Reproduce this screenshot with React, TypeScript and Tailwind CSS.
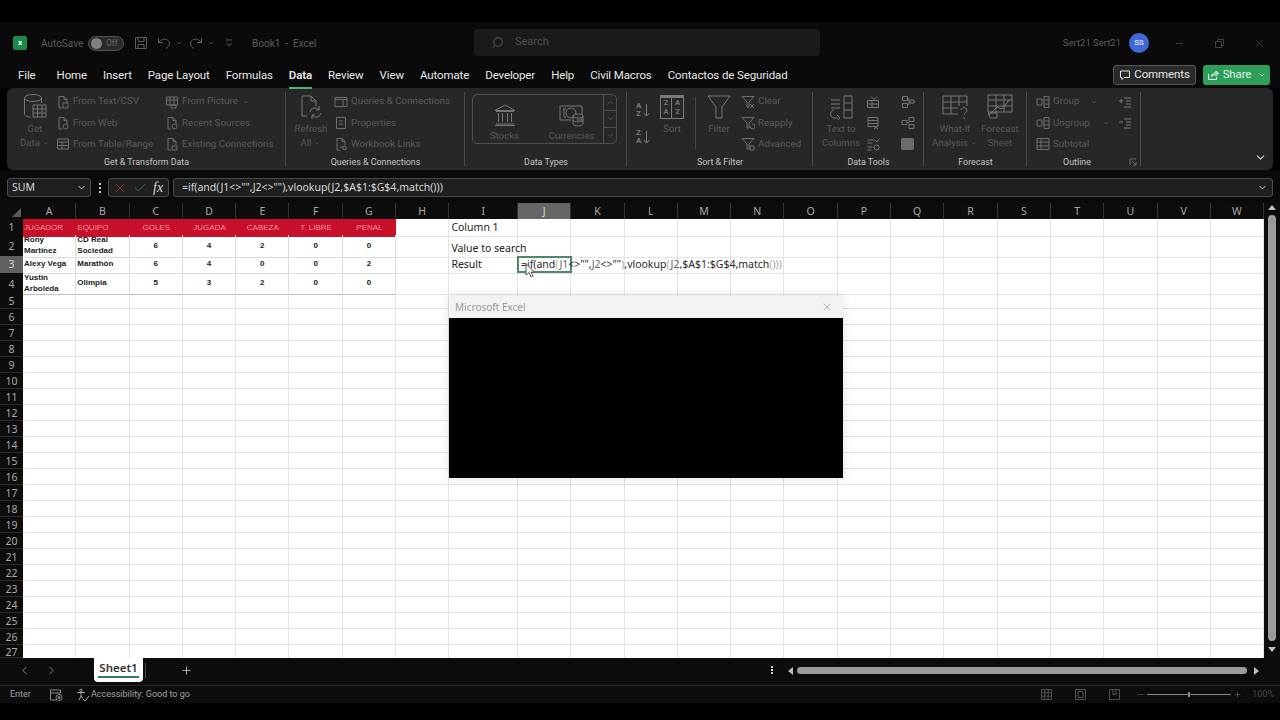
import React from 'react';
import { ChevronDown, ChevronLeft, ChevronRight, Minus, Plus, Search, X, Check } from 'lucide-react';

const rowGrid = 'grid grid-cols-[23px_repeat(8,53.3px)_68.6px_repeat(14,53.3px)]';
const colNames = 'ABCDEFGHIJKLMNOPQRSTUVW'.split('');

function Ic({ s = 16, w, h, vb, className, children }: { s?: number; w?: number; h?: number; vb?: string; className?: string; children: React.ReactNode }) {
  return (
    <svg width={w ?? s} height={h ?? s} viewBox={vb ?? `0 0 ${w ?? s} ${h ?? s}`} fill="none" stroke="currentColor" strokeWidth={1} className={className}>
      {children}
    </svg>
  );
}

const DocFold = ({ children }: { children?: React.ReactNode }) => (
  <Ic s={14}>
    <path d="M3 13V1.5h5l3 3V8M3 13h3M8 1.5v3h3" />
    {children}
  </Ic>
);

function SmallItem({ icon, label, caret, muted = 'text-[#5a5a5a]' }: { icon: React.ReactNode; label: string; caret?: boolean; muted?: string }) {
  return (
    <div className={`flex h-[21.3px] items-center gap-[3px] text-[9.8px] whitespace-nowrap ${muted}`}>
      <span className="flex w-[14px] shrink-0 justify-center text-[#6e6e6e]">{icon}</span>
      <span>{label}</span>
      {caret && <ChevronDown size={8} className="ml-[1px]" />}
    </div>
  );
}

function BigButton({ icon, lines, caret, className = '' }: { icon: React.ReactNode; lines: string[]; caret?: boolean; className?: string }) {
  return (
    <div className={`flex flex-col items-center text-[9.6px] leading-[14px] text-[#585858] ${className}`}>
      <div className="flex h-[31px] items-center text-[#767676]">{icon}</div>
      {lines.map((l, i) => (
        <div key={l} className="flex items-center gap-[2px] whitespace-nowrap">
          {l}
          {caret && i === lines.length - 1 && <ChevronDown size={8} />}
        </div>
      ))}
    </div>
  );
}

function Group({ label, width, sep = true, children, labelClass = '' }: { label: string; width: string; sep?: boolean; children: React.ReactNode; labelClass?: string }) {
  return (
    <div className={`relative flex shrink-0 flex-col pt-[3px] ${width}`}>
      <div className="flex h-[64px]">{children}</div>
      <div className={`mt-[2px] flex h-[12px] items-center justify-center text-[8.9px] text-[#c4c4c4] ${labelClass}`}>{label}</div>
      {sep && <div className="absolute top-[4px] right-0 bottom-[4px] w-px bg-[#4a4a4a]" />}
    </div>
  );
}

function TitleBar() {
  return (
    <div className="flex h-[42px] items-center bg-[#0a0a0a] text-[10px] text-[#5c5c5c]">
      <div className="ml-[13px] flex h-[14px] w-[14px] items-center justify-center rounded-[2px] bg-[#1d8a4c] text-[8px] font-bold text-white">x</div>
      <span className="ml-[14px] w-[41px] whitespace-nowrap">AutoSave</span>
      <div className="ml-[6px] flex h-[15px] w-[36px] items-center rounded-full border border-[#555] bg-[#2a2a2a] px-[2px]">
        <div className="h-[11px] w-[11px] rounded-full bg-[#808080]" />
        <span className="ml-[4px] text-[8.5px] text-[#666]">Off</span>
      </div>
      <Ic s={14} className="ml-[10px] text-[#5c5c5c]">
        <path d="M1.500 1.500h11v11h-11zM4 1.500v4h6v-4M4 12.500V8.500h6v4" />
      </Ic>
      <Ic s={14} className="ml-[9px] text-[#5c5c5c]">
        <path d="M1.500 2v4.500H6M1.500 6.500C4 3 9 2 11.500 5c2 2.500.5 5.500-2.500 7.500" />
      </Ic>
      <ChevronDown size={8} className="ml-[4px]" />
      <Ic s={14} className="ml-[6px] text-[#5c5c5c]">
        <path d="M12.500 2v4.500H8M12.500 6.500C10 3 5 2 2.500 5c-2 2.500-.5 5.500 2.500 7.500" />
      </Ic>
      <ChevronDown size={8} className="ml-[4px]" />
      <Ic s={10} className="ml-[9px] text-[#5c5c5c]">
        <path d="M2 2h6M2.500 5l2.500 3 2.500-3" />
      </Ic>
      <span className="ml-[18px] w-[64px] whitespace-nowrap">Book1&nbsp; -&nbsp; Excel</span>
      <div className="mb-[2px] ml-[158px] flex h-[27px] w-[346px] items-center rounded-[3px] bg-[#1a1a1a] pl-[17px] text-[11px] text-[#4f4f4f]">
        <Search size={13} className="-scale-x-100" />
        <span className="ml-[11px]">Search</span>
      </div>
      <span className="ml-auto text-[9.5px] text-[#5c5c5c]">Sert21 Sert21</span>
      <div className="ml-[8px] flex h-[20px] w-[20px] items-center justify-center rounded-full bg-[#4168d8] text-[8px] text-white">SS</div>
      <Minus size={11} className="ml-[25px] text-[#3f3f3f]" />
      <Ic s={11} className="ml-[29px] text-[#3f3f3f]">
        <path d="M1.500 3.500h6v6h-6zM3.500 3.500v-2h6v6h-2" />
      </Ic>
      <X size={13} strokeWidth={1.2} className="mr-[14px] ml-[28px] text-[#4f4f4f]" />
    </div>
  );
}

function MenuBar() {
  const items: [string, string][] = [
    ['File', 'ml-[18px]'],
    ['Home', 'ml-[21px]'],
    ['Insert', 'ml-[16px]'],
    ['Page Layout', 'ml-[16px]'],
    ['Formulas', 'ml-[16px]'],
    ['Data', 'ml-[16px]'],
    ['Review', 'ml-[16px]'],
    ['View', 'ml-[16px]'],
    ['Automate', 'ml-[16px]'],
    ['Developer', 'ml-[16px]'],
    ['Help', 'ml-[16px]'],
    ['Civil Macros', 'ml-[16px]'],
    ['Contactos de Seguridad', 'ml-[16px]'],
  ];
  return (
    <div className="flex h-[24px] items-center bg-[#0a0a0a] text-[11.5px] tracking-[-0.12px] text-[#e6e6e6]">
      {items.map(([name, cls]) => (
        <div key={name} className={`relative whitespace-nowrap ${cls} ${name === 'Data' ? 'font-semibold' : ''}`}>
          {name}
          {name === 'Data' && <div className="absolute right-0 -bottom-[4px] left-0 h-[2px] bg-[#4fb07a]" />}
        </div>
      ))}
      <div className="mb-[2px] ml-auto flex h-[20px] w-[83px] items-center justify-center gap-[3px] rounded-[3px] border border-[#555] bg-[#2a2a2a] text-[11.5px]">
        <Ic s={12}>
          <path d="M1.500 2h9v6.500H5L3 10.500v-2H1.500z" />
        </Ic>
        Comments
      </div>
      <div className="mr-[10px] mb-[2px] ml-[7px] flex h-[20px] w-[67px] items-center justify-center gap-[4px] rounded-[3px] bg-[#2e9e5b] text-[11.5px] text-[#dff3e6]">
        <Ic s={12}>
          <path d="M4 6.500 9 3v1.500h2M9 3v-1l2.500 2.500L9 7V5.500C6.500 5.500 5 6.500 4 8.500M1.500 5v5.500h8V8" />
        </Ic>
        Share
        <ChevronDown size={8} className="ml-[3px]" />
      </div>
    </div>
  );
}

function Ribbon() {
  return (
    <div className="mx-[7px] flex h-[82px] rounded-[6px] bg-[#272727]">
      <Group label="Get & Transform Data" width="w-[279px]">
        <div className="ml-[10px] w-[36px]">
          <BigButton
            lines={['Get', 'Data']}
            caret
            icon={
              <Ic w={26} h={28}>
                <ellipse cx="11" cy="5" rx="8.500" ry="3.500" />
                <path d="M2.500 5v16c0 2 3 3 6 3M19.500 5v5" />
                <path d="M11 12h13v12H11zM11 16h13M11 20h13M15.500 12v12M20 12v12" />
              </Ic>
            }
          />
        </div>
        <div className="ml-[3px] w-[109px]">
          <SmallItem label="From Text/CSV" icon={<DocFold><path d="M7 8h5v5H7z" /></DocFold>} />
          <SmallItem label="From Web" icon={<DocFold><circle cx="9.500" cy="10.500" r="2.500" /></DocFold>} />
          <SmallItem label="From Table/Range" icon={<Ic s={14}><path d="M1.500 2h11v10h-11zM1.500 5h11M1.500 8.500h11M6 5v7" /></Ic>} />
        </div>
        <div className="w-[110px]">
          <SmallItem label="From Picture" caret icon={<Ic s={14}><path d="M1.500 2h11v8h-11zM1.500 5h11M5 2v8M9 2v8M6 10h5v3H6z" /></Ic>} />
          <SmallItem label="Recent Sources" icon={<DocFold><circle cx="9.500" cy="10.500" r="2.500" /></DocFold>} />
          <SmallItem label="Existing Connections" icon={<DocFold><path d="M7 9h5v4H7z" /></DocFold>} />
        </div>
      </Group>

      <Group label="Queries & Connections" width="w-[179px]">
        <div className="ml-[6px] w-[38px]">
          <BigButton
            lines={['Refresh', 'All']}
            caret
            icon={
              <Ic w={26} h={28} className="mt-[2px]">
                <path d="M4 22V2h9l5 5v5M13 2v5h5M4 22h5" />
                <path d="M12 18a5 5 0 0 1 9-2M23 19a5 5 0 0 1-9 2M21 12v4h-3M14 25v-4h3" />
              </Ic>
            }
          />
        </div>
        <div className="ml-[4px]">
          <SmallItem label="Queries & Connections" icon={<Ic s={14}><path d="M1 2.500h12v9H1zM1 4.500h12M9 4.500v7" /></Ic>} />
          <SmallItem label="Properties" icon={<Ic s={14}><path d="M2.500 1.500h9v11h-9zM5 5h4M5 8h4" /></Ic>} />
          <SmallItem label="Workbook Links" icon={<DocFold><path d="M6 10h3M9 9.500h3v3H9z" /></DocFold>} />
        </div>
      </Group>

      <Group label="Data Types" width="w-[162px]">
        <div className="mt-[3px] ml-[7px] flex h-[50px] w-[145px] rounded-[5px] border border-[#505050]">
          <div className="w-[64px]">
            <BigButton
              className="pt-[3px]"
              lines={['Stocks']}
              icon={
                <Ic w={24} h={24} className="mt-[2px]">
                  <path d="M12 2 2 7.500h20zM3 8.500h18M3 21h18M2 22.500h20M5.500 10v9M9.500 10v9M14.500 10v9M18.500 10v9" />
                </Ic>
              }
            />
          </div>
          <div className="ml-[4px] w-[64px]">
            <BigButton
              className="pt-[3px]"
              lines={['Currencies']}
              icon={
                <Ic w={26} h={24} className="mt-[2px]">
                  <path d="M1 3h22v14h-5M1 3v14h11M4 6h3M5 6v8h2" />
                  <circle cx="12" cy="10" r="5" />
                  <ellipse cx="19" cy="13" rx="5" ry="2" fill="#272727" />
                  <path d="M14 13v8c0 2.500 10 2.500 10 0v-8M14 17c0 2.500 10 2.500 10 0" />
                </Ic>
              }
            />
          </div>
          <div className="flex w-[13px] flex-col border-l border-[#505050] text-[#5f5f5f]">
            <div className="flex flex-1 items-center justify-center border-b border-[#505050]"><ChevronDown size={9} className="rotate-180" /></div>
            <div className="flex flex-1 items-center justify-center border-b border-[#505050]"><ChevronDown size={9} /></div>
            <div className="flex flex-1 items-center justify-center"><ChevronDown size={9} /></div>
          </div>
        </div>
      </Group>

      <Group label="Sort & Filter" width="w-[186px]">
        <div className="ml-[9px] flex h-full w-[18px] flex-col pt-[6px] text-[8px] leading-[8px] font-bold text-[#7a7a7a]">
          <div className="flex h-[25px] items-center gap-[1px]"><span>A<br />Z</span><Ic w={9} h={14}><path d="M4.500 1v12M1.500 10l3 3 3-3" /></Ic></div>
          <div className="mt-[2px] flex h-[25px] items-center gap-[1px]"><span>Z<br />A</span><Ic w={9} h={14}><path d="M4.500 1v12M1.500 10l3 3 3-3" /></Ic></div>
        </div>
        <div className="ml-[6px] w-[24px]">
          <BigButton
            className="w-[24px]"
            lines={['Sort']}
            icon={
              <div className="mt-[1px] grid h-[24px] w-[24px] grid-cols-2 border border-t-[3px] border-[#7a7a7a] text-center text-[7.5px] leading-[9px] font-bold">
                <span className="border-r border-[#7a7a7a]">Z<br />A</span>
                <span>A<br />Z</span>
              </div>
            }
          />
        </div>
        <div className="mx-[11px] mt-[6px] h-[52px] w-px bg-[#484848]" />
        <div className="w-[24px]">
          <BigButton
            lines={['Filter']}
            icon={
              <Ic w={24} h={26}>
                <path d="M1 2h22L15 13v11H9V13z" />
              </Ic>
            }
          />
        </div>
        <div className="ml-[10px]">
          <SmallItem label="Clear" icon={<Ic s={14}><path d="M1 1.500h12L8 7v5H6V7zM9 9l4 4M13 9l-4 4" /></Ic>} />
          <SmallItem label="Reapply" icon={<Ic s={14}><path d="M1 1.500h12L8 7v5H6V7zM9 10a2.500 2.500 0 1 0 2-2" /></Ic>} />
          <SmallItem label="Advanced" icon={<Ic s={14}><path d="M1 1.500h12L8 7v5H6V7zM9 9h4v4H9z" /></Ic>} />
        </div>
      </Group>

      <Group label="Data Tools" width="w-[111px]">
        <div className="ml-[11px] w-[34px]">
          <BigButton
            lines={['Text to', 'Columns']}
            icon={
              <Ic w={26} h={26}>
                <path d="M3 6h9M3 10h9M3 14h9M16 2h8v22h-8zM16 9h8M16 16h8M10 24H6c-4 0-5-7 0-8M9 21l3 3-3 3" />
              </Ic>
            }
          />
        </div>
        <div className="ml-[7px] flex w-[15px] flex-col items-center text-[#747474]">
          <div className="flex h-[21.3px] items-center"><Ic s={14}><path d="M1.500 5.500h11v7h-11zM1.500 9h11M6 5.500v7M5 1.500l3 3 3-3" /></Ic></div>
          <div className="flex h-[21.3px] items-center"><Ic s={14}><path d="M2 1.500h10v9H2zM2 4.500h10M2 7.500h10M8 10l4 3M12 10l-4 3" /></Ic></div>
          <div className="flex h-[21.3px] items-center"><Ic s={14}><path d="M1.500 3h7M1.500 6h5M1.500 10h5M1.500 13h4M9 3l2 2 2.500-3.500" /><circle cx="10.500" cy="10.500" r="2.500" /></Ic></div>
        </div>
        <div className="ml-[20px] flex w-[15px] flex-col items-center text-[#747474]">
          <div className="flex h-[21.3px] items-center"><Ic s={14}><path d="M1.500 1.500h5v4h-5zM1.500 8.500h5v4h-5zM9 5h4v3H9zM6.500 3.500H8v6H6.500" /></Ic></div>
          <div className="flex h-[21.3px] items-center"><Ic s={14}><path d="M1 4.500h5v4H1zM8 1.500h5v4H8zM8 8.500h5v4H8zM6 6.500h2" /></Ic></div>
          <div className="flex h-[21.3px] items-center"><div className="h-[12px] w-[13px] rounded-[2px] bg-[#6a6a6a]" /></div>
        </div>
      </Group>

      <Group label="Forecast" width="w-[103px]">
        <div className="ml-[8px] w-[46px]">
          <BigButton
            lines={['What-If', 'Analysis']}
            caret
            icon={
              <Ic w={28} h={28}>
                <path d="M2 3h24v10M2 3v18h15M2 9h24M2 15h15M10 3v18M18 3v10" />
                <path d="M20 17c0-3 6-3 6 0 0 2.500-3 2.500-3 5M23 24v2" />
              </Ic>
            }
          />
        </div>
        <div className="w-[44px]">
          <BigButton
            lines={['Forecast', 'Sheet']}
            icon={
              <Ic w={26} h={28}>
                <path d="M1 2h24v17H1zM1 7h24M1 13h24M9 2v17M17 2v17" />
                <path d="M2 22 10 14l5 2 8-10M1 20h9v5H3z" />
              </Ic>
            }
          />
        </div>
      </Group>

      <Group label="Outline" width="w-[114px]" labelClass="pr-[14px]">
        <div className="ml-[9px] w-[85px]">
          <div className="flex">
            <div className="w-[54px]"><SmallItem label="Group" icon={<Ic s={14}><path d="M1 4h5v6H1zM8 1.500h5v11H8zM8 5h5M8 9h5" /></Ic>} /></div>
            <ChevronDown size={8} className="mt-[7px] text-[#5f5f5f]" />
          </div>
          <div className="flex">
            <div className="w-[66px]"><SmallItem label="Ungroup" icon={<Ic s={14}><path d="M1 4h5v6H1zM8 1.500h5v11H8zM8 5h5M8 9h5" /></Ic>} /></div>
            <ChevronDown size={8} className="mt-[7px] text-[#5f5f5f]" />
          </div>
          <SmallItem label="Subtotal" icon={<Ic s={14}><path d="M1 1.500h12v11H1zM1 5h12M1 9h12M5 1.500v11" /></Ic>} />
        </div>
        <div className="ml-[-4px] flex w-[15px] flex-col items-center text-[#7a7a7a]">
          <div className="flex h-[21.3px] items-center"><Ic s={14}><path d="M6 3h7M8 6h5M8 9h5M6 12h7M1 6h4M3 4v4" /></Ic></div>
          <div className="flex h-[21.3px] items-center"><Ic s={14}><path d="M6 3h7M8 6h5M8 9h5M6 12h7M1 6h4" /></Ic></div>
        </div>
        <Ic s={8} className="absolute right-[4px] bottom-[4px] text-[#6a6a6a]">
          <path d="M1 1h6M1 1v6M3 3l4 4M4 7h3V4" />
        </Ic>
      </Group>

      <div className="flex flex-1 items-end justify-end pr-[6px] pb-[6px] text-[#d0d0d0]">
        <ChevronDown size={13} />
      </div>
    </div>
  );
}

function FormulaBar() {
  return (
    <div className="flex h-[33px] items-center bg-[#0a0a0a] pt-[2px] font-['Noto_Sans',sans-serif] text-[10.5px] text-[#d8d8d8]">
      <div className="ml-[7px] flex h-[19px] w-[84px] items-center justify-between rounded-[3px] border border-[#4a4a4a] bg-[#1f1f1f] pr-[3px] pl-[4px]">
        SUM
        <ChevronDown size={11} />
      </div>
      <div className="ml-[6px] flex w-[5px] flex-col items-center gap-[2px]">
        <div className="h-[2px] w-[2px] bg-[#ccc]" />
        <div className="h-[2px] w-[2px] bg-[#ccc]" />
        <div className="h-[2px] w-[2px] bg-[#ccc]" />
      </div>
      <div className="ml-[6px] flex h-[19px] w-[61px] items-center rounded-[3px] border border-[#4a4a4a] bg-[#1f1f1f] pl-[4px]">
        <X size={14} strokeWidth={1.3} className="text-[#b0373a]" />
        <Check size={14} strokeWidth={1.3} className="ml-[6px] text-[#3e8a5a]" />
        <span className="ml-[6px] font-['Liberation_Serif',serif] text-[14px] italic">fx</span>
      </div>
      <div className="mr-[7px] ml-[4px] flex h-[19px] flex-1 items-center justify-between rounded-[3px] border border-[#4a4a4a] bg-[#1f1f1f] pr-[4px] pl-[8px]">
        <span>=if(and(J1&lt;&gt;"",J2&lt;&gt;""),vlookup(J2,$A$1:$G$4,match()))</span>
        <ChevronDown size={11} />
      </div>
    </div>
  );
}

function ColumnHeader() {
  return (
    <div className={`${rowGrid} h-[16px] bg-[#0d0d0d] font-['Noto_Sans',sans-serif] text-[10.5px] leading-[16px] text-[#a8a8a8]`}>
      <div className="relative">
        <div className="absolute right-[2px] bottom-[2px] h-0 w-0 border-t-[9px] border-r-[9px] border-t-transparent border-r-[#5a5a5a]" />
      </div>
      {colNames.map(c => (
        <div key={c} className={`border-r border-[#333] text-center ${c === 'J' ? 'bg-[#666] text-[#d5d5d5]' : ''}`}>
          {c}
        </div>
      ))}
    </div>
  );
}

const cellLine = 'border-r border-b border-[#e4e4e4]';

function RowLabel({ n, active }: { n: number; active?: boolean }) {
  return (
    <div className={`flex justify-center border-b border-[#2a2a2a] font-['Noto_Sans',sans-serif] text-[10.5px] leading-[10px] ${n === 27 ? 'items-end' : 'items-center'} ${active ? 'bg-[#606060] text-[#d5d5d5]' : 'bg-[#0d0d0d] text-[#a8a8a8]'}`}>
      {n}
    </div>
  );
}

const headerCells = ['JUGADOR', 'EQUIPO', 'GOLES', 'JUGADA', 'CABEZA', 'T. LIBRE', 'PENAL'];
const players = [
  { h: 'h-[21px]', n: 2, cells: ['Rony Martínez', 'CD Real Sociedad', '6', '4', '2', '0', '0'] },
  { h: 'h-[17px]', n: 3, cells: ['Alexy Vega', 'Marathón', '6', '4', '0', '0', '2'] },
  { h: 'h-[20px]', n: 4, cells: ['Yustin Arboleda', 'Olimpia', '5', '3', '2', '0', '0'] },
];

function FormulaEcho() {
  return (
    <span className="relative z-10 mt-[1px] ml-[3px] text-[10.5px] whitespace-nowrap text-[#2a2a2a]">
      =if(and<span className="text-[#a8a8a8]">(</span>
      <span className="text-[#666]">J1</span>&lt;&gt;"",<span className="text-[#666]">J2</span>&lt;&gt;""<span className="text-[#a8a8a8]">)</span>,vlookup
      <span className="text-[#a8a8a8]">(</span><span className="text-[#666]">J2</span>,$A$1:$G$4,match<span className="text-[#a8a8a8]">()))</span>
    </span>
  );
}

function Sheet() {
  const tailCols = colNames.slice(7);
  return (
    <div className="relative h-[439px] overflow-hidden bg-white font-['Liberation_Sans',sans-serif]">
      <div className={`${rowGrid} h-[16px]`}>
        <RowLabel n={1} />
        {headerCells.map((c, i) => (
          <div key={c} className={`flex items-center bg-[#c8102a] text-[8px] text-[#ee939b] ${i < 2 ? 'pl-[1px]' : 'justify-center'}`}>
            {c}
          </div>
        ))}
        {tailCols.map(c => (
          <div key={c} className={`${cellLine} flex items-center pl-[2px] font-['Noto_Sans',sans-serif] text-[10.5px] text-[#222]`}>
            <span className="mt-[1px]">{c === 'I' && 'Column 1'}</span>
          </div>
        ))}
      </div>
      {players.map(p => (
        <div key={p.n} className={`${rowGrid} ${p.h}`}>
          <RowLabel n={p.n} active={p.n === 3} />
          {p.cells.map((c, i) => (
            <div key={i} className={`flex items-center border-r border-b border-[#dcdcdc] text-[8px] leading-[10.5px] font-bold text-[#1a1a1a] ${i < 2 ? 'pl-[1px]' : 'justify-center'} ${p.n === 4 ? 'border-b-[#bdbdbd]' : ''}`}>
              <span className="max-w-[48px]">{c}</span>
            </div>
          ))}
          {tailCols.map(c => (
            <div key={c} className={`${cellLine} flex items-center font-['Noto_Sans',sans-serif] text-[10.5px] text-[#222] ${c === 'I' ? 'pl-[2px]' : ''}`}>
              {c === 'I' && p.n === 2 && <span className="mt-[6px] whitespace-nowrap">Value to search</span>}
              {c === 'I' && p.n === 3 && <span className="mt-[1px]">Result</span>}
              {c === 'J' && p.n === 3 && <FormulaEcho />}
            </div>
          ))}
        </div>
      ))}
      {Array.from({ length: 23 }, (_, i) => i + 5).map(n => (
        <div key={n} className={`${rowGrid} ${n === 27 ? 'h-[13px]' : 'h-[16px]'}`}>
          <RowLabel n={n} />
          {colNames.map(c => (
            <div key={c} className={n === 27 ? 'border-r border-[#e4e4e4]' : cellLine} />
          ))}
        </div>
      ))}

      {/* active cell J3 */}
      <div className="absolute top-[37px] left-[517px] h-[17px] w-[55px] border-2 border-[#4d8a68]" />
      <Ic w={12} h={16} className="absolute top-[44px] left-[525px] z-20 text-[#555]">
        <path d="M1 1v11l3-2.500 2 4.500 2-1-2-4h4z" fill="#fff" />
      </Ic>

      {/* dialog opening over the grid */}
      <div className="absolute top-[77px] left-[449px] flex h-[182px] w-[394px] flex-col shadow-[0_0_10px_rgba(0,0,0,0.12)]">
        <div className="flex h-[22px] items-center justify-between bg-[#f3f3f3] pr-[10px] pl-[6px] font-['Noto_Sans',sans-serif] text-[10px] text-[#9a9a9a]">
          Microsoft Excel
          <X size={12} strokeWidth={1} className="text-[#707070]" />
        </div>
        <div className="flex-1 bg-black" />
      </div>
    </div>
  );
}

function VerticalScroll() {
  return (
    <div className="flex w-[16px] shrink-0 flex-col items-center bg-[#0d0d0d] pt-[2px]">
      <div className="h-0 w-0 border-x-[4px] border-b-[5px] border-x-transparent border-b-[#bdbdbd]" />
      <div className="mt-[5px] h-[426px] w-[8px] rounded-full bg-[#9b9b9b]" />
      <div className="mt-[6px] h-0 w-0 border-x-[4px] border-t-[5px] border-x-transparent border-t-[#bdbdbd]" />
    </div>
  );
}

function SheetTabs() {
  return (
    <div className="flex h-[27px] items-start bg-[#0c0c0c] text-[#9a9a9a]">
      <ChevronLeft size={13} strokeWidth={1.5} className="mt-[6px] ml-[18px]" />
      <ChevronRight size={13} strokeWidth={1.5} className="mt-[6px] ml-[14px]" />
      <div className="ml-[36px] flex h-[24px] w-[49px] flex-col items-center rounded-b-[4px] bg-white pt-[2px]">
        <span className="border-b-2 border-[#2f7d57] px-[1px] font-['Noto_Sans',sans-serif] text-[11.5px] leading-[16px] font-semibold text-[#333]">Sheet1</span>
      </div>
      <div className="mt-[5px] ml-[2px] h-[15px] w-px bg-[#444]" />
      <Plus size={13} strokeWidth={1.4} className="mt-[6px] ml-[34px] text-[#cfcfcf]" />
      <div className="mt-[8px] ml-[578px] flex w-[3px] flex-col gap-[1px]">
        <div className="h-[2px] w-[2px] bg-[#ccc]" />
        <div className="h-[2px] w-[2px] bg-[#ccc]" />
        <div className="h-[2px] w-[2px] bg-[#ccc]" />
      </div>
      <div className="mt-[9px] ml-[14px] h-0 w-0 border-y-[4px] border-r-[5px] border-y-transparent border-r-[#bdbdbd]" />
      <div className="mt-[9px] ml-[4px] h-[7px] w-[450px] rounded-full bg-[#9b9b9b]" />
      <div className="mt-[9px] ml-[7px] h-0 w-0 border-y-[4px] border-l-[5px] border-y-transparent border-l-[#bdbdbd]" />
    </div>
  );
}

function StatusBar() {
  return (
    <div className="flex h-[18px] items-center border-t border-[#262626] bg-[#0c0c0c] text-[9px] text-[#a0a0a0]">
      <span className="ml-[10px] w-[21px]">Enter</span>
      <Ic s={14} className="ml-[18px] text-[#8a8a8a]">
        <path d="M1.500 2h10v3h-10zM1.500 5v7h6" />
        <circle cx="10" cy="9.500" r="3" />
        <circle cx="10" cy="9.500" r="1" fill="currentColor" />
      </Ic>
      <Ic s={14} className="ml-[13px] text-[#a0a0a0]">
        <circle cx="5" cy="2.500" r="1.300" />
        <path d="M1 4.500h8M5 4.500V8M5 8 3 12M5 8l1.500 2.500M7 11l2 2 4-5" />
      </Ic>
      <span className="ml-[1px]">Accessibility: Good to go</span>
      <div className="ml-auto flex items-center text-[#505050]">
        <Ic s={13}>
          <path d="M1.500 1.500h10v10h-10zM1.500 4.800h10M1.500 8.200h10M4.800 1.500v10M8.200 1.500v10" />
        </Ic>
        <Ic s={13} className="ml-[21px]">
          <path d="M1.500 1.500h10v10h-10zM4 3.500h5v6H4z" />
        </Ic>
        <Ic s={13} className="ml-[21px]">
          <path d="M1.500 1.500h10v10h-10zM5 1.500v5h3v-5" />
        </Ic>
        <Minus size={9} className="ml-[15px]" />
        <div className="relative ml-[2px] h-px w-[84px] bg-[#8a8a8a]">
          <div className="absolute -top-[2px] left-[41px] h-[5px] w-[2px] bg-[#8a8a8a]" />
        </div>
        <Plus size={9} className="ml-[2px]" />
        <span className="mr-[6px] ml-[10px] text-[9px] text-[#454545]">100%</span>
      </div>
    </div>
  );
}

export default function App() {
  return (
    <div className="flex h-[720px] w-[1280px] flex-col overflow-hidden bg-black font-['Roboto',sans-serif]">
      <div className="h-[22px] shrink-0" />
      <TitleBar />
      <MenuBar />
      <Ribbon />
      <FormulaBar />
      <div className="flex">
        <div className="w-[1264px] shrink-0">
          <ColumnHeader />
          <Sheet />
        </div>
        <VerticalScroll />
      </div>
      <SheetTabs />
      <StatusBar />
    </div>
  );
}
